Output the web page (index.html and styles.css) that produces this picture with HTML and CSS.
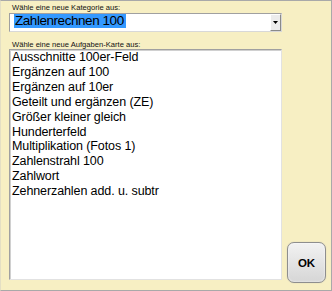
FILE: index.html
```html
<!DOCTYPE html>
<html lang="de">
<head>
    <meta charset="UTF-8">
    <meta name="viewport" content="width=device-width, initial-scale=1.0">
    <title>Karte wählen</title>
    <link rel="stylesheet" href="styles.css">
</head>
<body>
    <div class="window">
        <div class="form">
            <div class="caption">Wähle eine neue Kategorie aus:</div>
            <div class="combo">
                <span class="combo-value">Zahlenrechnen 100</span>
                <span class="combo-arrow">
                    <svg width="5" height="3" viewBox="0 0 5 3"><path d="M0 0H5L2.5 3Z" fill="#000"/></svg>
                </span>
            </div>
            <div class="caption caption-list">Wähle eine neue Aufgaben-Karte aus:</div>
            <ul class="listbox">
                <li>Ausschnitte 100er-Feld</li>
                <li>Ergänzen auf 100</li>
                <li>Ergänzen auf 10er</li>
                <li>Geteilt und ergänzen (ZE)</li>
                <li>Größer kleiner gleich</li>
                <li>Hunderterfeld</li>
                <li>Multiplikation (Fotos 1)</li>
                <li>Zahlenstrahl 100</li>
                <li>Zahlwort</li>
                <li>Zehnerzahlen add. u. subtr</li>
            </ul>
        </div>
        <button class="ok" type="button">OK</button>
    </div>
</body>
</html>
```

FILE: styles.css
```css
body {
    margin: 0;
    font-family: "Liberation Sans", Arial, sans-serif;
    color: #000;
}

.window {
    width: 332px;
    height: 291px;
    box-sizing: border-box;
    display: flex;
    padding: 2px 5px 7px 8px;
    background-color: #f7efc3;
    border: 1px solid #a9a9a9;
    border-left-color: #e4dfc4;
}

.form {
    width: 273px;
    display: flex;
    flex-direction: column;
    margin-bottom: 3px;
}

.caption {
    font-size: 7.6px;
    line-height: 9px;
    padding-left: 3px;
    white-space: nowrap;
    color: #111;
}

.caption-list {
    margin-top: 8px;
}

.combo {
    height: 19px;
    margin-top: 1px;
    box-sizing: border-box;
    display: flex;
    align-items: flex-start;
    justify-content: space-between;
    background-color: #fff;
    border: 1px solid #a0a0a0;
    border-right-color: #d8d8d8;
    border-bottom-color: #d8d8d8;
}

.combo-value {
    margin: 0 0 0 4px;
    padding: 0 2px 0 1px;
    font-size: 13.5px;
    letter-spacing: -0.45px;
    line-height: 14px;
    background-color: #3399ff;
    color: #000;
}

.combo-arrow {
    width: 11px;
    height: 17px;
    box-sizing: border-box;
    display: flex;
    align-items: center;
    justify-content: center;
    background-color: #ececec;
    border: 1px solid #fff;
    border-right-color: #8a8a8a;
    border-bottom-color: #8a8a8a;
}

.listbox {
    flex: 1;
    margin: 0;
    padding: 0 0 0 2px;
    list-style: none;
    background-color: #fff;
    border: 1px solid #e2e2e2;
    border-top-color: #a0a0a0;
    border-left-color: #a0a0a0;
    box-shadow: inset 1px 1px 0 #d0d0d0;
    font-size: 12.5px;
    letter-spacing: -0.1px;
    line-height: 14.9px;
}

.ok {
    align-self: flex-end;
    width: 39px;
    height: 41px;
    margin-left: 5px;
    padding: 0;
    font-family: "Liberation Sans", Arial, sans-serif;
    font-size: 11.5px;
    font-weight: bold;
    color: #000;
    background: linear-gradient(#f2f2f2, #d6d6d6);
    border: 1px solid #8e8e8e;
    border-radius: 7px;
    box-shadow: inset 0 0 2px #ffffff, 0 0 1px #b5b5b5;
    cursor: pointer;
}
```
